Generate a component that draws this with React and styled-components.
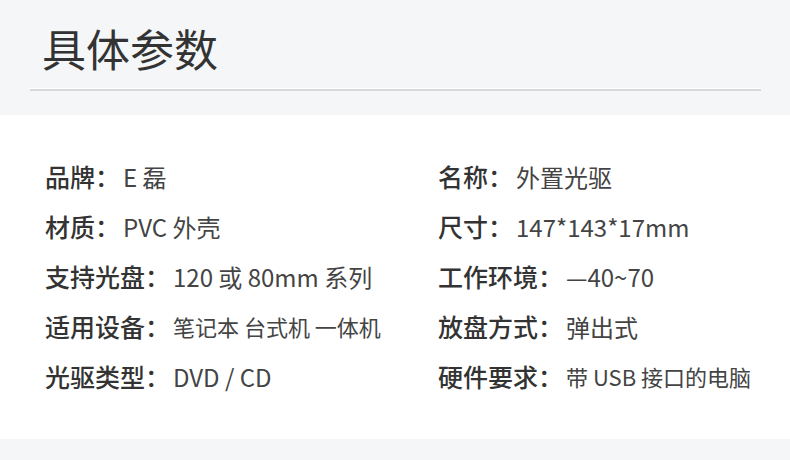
import React from 'react';
import styled, { createGlobalStyle } from 'styled-components';

const GlobalStyle = createGlobalStyle`
  html, body {
    margin: 0;
    padding: 0;
    background: #f5f6f8;
  }
  body {
    font-family: "Noto Sans CJK SC", "Noto Sans", sans-serif;
  }
`;

// [label, value, value font size]
const SPECS = [
  ['品牌：', 'E 磊', 24, '名称：', '外置光驱', 24],
  ['材质：', 'PVC 外壳', 24, '尺寸：', '147*143*17mm', 24],
  ['支持光盘：', '120 或 80mm 系列', 24, '工作环境：', '—40~70', 24],
  ['适用设备：', '笔记本 台式机 一体机', 22, '放盘方式：', '弹出式', 24],
  ['光驱类型：', 'DVD / CD', 24, '硬件要求：', '带 USB 接口的电脑', 22],
];

const App = () => {
  return (
    <Page>
      <GlobalStyle />
      <Header>
        <Title>具体参数</Title>
        <Divider />
      </Header>
      <Body>
        <SpecGrid>
          {SPECS.map((row) => (
            <React.Fragment key={row[0]}>
              <Item>
                <Label>{row[0]}</Label>
                <Value size={row[2]}>{row[1]}</Value>
              </Item>
              <Item>
                <Label>{row[3]}</Label>
                <Value size={row[5]}>{row[4]}</Value>
              </Item>
            </React.Fragment>
          ))}
        </SpecGrid>
      </Body>
      <Footer />
    </Page>
  );
};

export default App;

const Page = styled.div`
  width: 790px;
  height: 460px;
  display: flex;
  flex-direction: column;
  background: #f5f6f8;
`;

const Header = styled.div`
  height: 115px;
  box-sizing: border-box;
  padding: 18px 29px 0 30px;
  background: #f5f6f8;
`;

const Title = styled.h1`
  margin: 0 0 0 12px;
  font-size: 44px;
  font-weight: 400;
  line-height: 60px;
  color: #333;
`;

const Divider = styled.div`
  margin-top: 10px;
  height: 2px;
  border-top: 1px solid #fff;
  background: #d8d8d8;
`;

const Body = styled.div`
  height: 324px;
  background: #fff;
  box-sizing: border-box;
  padding: 36px 0 0 45px;
`;

const SpecGrid = styled.div`
  display: grid;
  grid-template-columns: 393px 1fr;
  grid-auto-rows: 50px;
`;

const Item = styled.div`
  display: flex;
  align-items: center;
  white-space: nowrap;
`;

const Label = styled.span`
  font-size: 25px;
  font-weight: 500;
  color: #333;
  margin-right: 3px;
`;

const Value = styled.span`
  font-size: ${(props) => props.size || 24}px;
  font-weight: 400;
  color: #444;
`;

const Footer = styled.div`
  flex: 1;
  background: #f5f6f8;
`;
